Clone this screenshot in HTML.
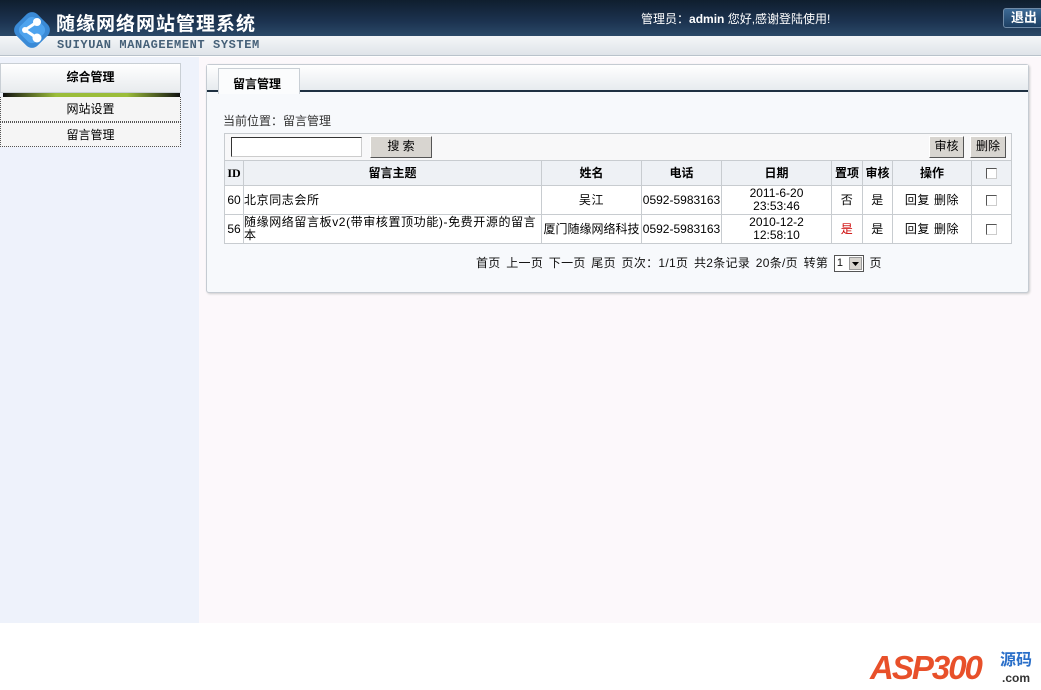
<!DOCTYPE html>
<html><head><meta charset="utf-8">
<style>
*{margin:0;padding:0;box-sizing:border-box}
body{width:1041px;height:690px;overflow:hidden;background:#fff;font-family:"Liberation Sans","Noto Sans CJK SC","WenQuanYi Zen Hei",sans-serif;font-size:12px;color:#000;position:relative}
.hd{position:absolute;left:0;top:0;width:1041px;height:36px;background:linear-gradient(#0f1e2e,#1c3350 60%,#2a4968)}
.band{position:absolute;left:0;top:36px;width:1041px;height:20px;background:linear-gradient(#f4f6f8,#dfe4e9);border-bottom:1px solid #b9c2cb}
.title{position:absolute;left:56px;top:9px;color:#fff;font-size:19px;font-weight:bold;letter-spacing:1px}
.sub{position:absolute;left:57px;top:38px;color:#456078;font-family:"Liberation Mono",monospace;font-size:12px;font-weight:bold;letter-spacing:0.6px}
.admin{position:absolute;left:641px;top:10px;color:#fff;font-size:12px}
.out{position:absolute;left:1003px;top:8px;width:40px;height:20px;border:1px solid #6f8aa6;border-radius:3px;background:linear-gradient(#3d6a95,#1d3f63);color:#fff;font-weight:bold;font-size:13px;padding-left:7px;line-height:18px}
.side{position:absolute;left:0;top:57px;width:199px;height:566px;background:#eef2fb}
.main{position:absolute;left:199px;top:57px;width:842px;height:566px;background:#fcf8fb}
.sh{position:absolute;left:0;top:63px;width:181px;height:30px;background:linear-gradient(#fff,#e8ebee);border:1px solid #c9cfd5;text-align:center;font-weight:bold;line-height:26px}
.sbar{position:absolute;left:3px;top:93px;width:177px;height:4px;background:linear-gradient(90deg,#111,#9bbd3a 30%,#9bbd3a 70%,#111)}
.si{position:absolute;left:0;width:181px;height:25px;border:1px dotted #555;border-top:none;background:#f5f5f5;text-align:center;line-height:24px}
.panel{position:absolute;left:206px;top:64px;width:823px;height:229px;background:#f7f9fc;border:1px solid #c5cbd2;border-radius:3px;box-shadow:1px 1px 2px #ccc}
.ptop{position:absolute;left:0;top:0;width:821px;height:27px;background:linear-gradient(#fff,#e7ebef);border-bottom:2px solid #1f3142}
.tab{position:absolute;left:11px;top:3px;width:82px;height:26px;background:#fbfcfd;border:1px solid #c9cfd5;border-bottom:none;font-weight:bold;padding:6px 0 0 14px}
.loc{position:absolute;left:223px;top:112px;color:#333}
table{position:absolute;left:224px;top:160px;width:788px;border-collapse:collapse;font-size:12px;table-layout:fixed}
td,th{border:1px solid #c8ccd0;text-align:center;height:25px;line-height:13px;overflow:hidden}
th{background:#eef1f5;font-weight:bold;height:25px}
td{background:#fff;height:29px;letter-spacing:0.6px}
.bar{position:absolute;left:224px;top:133px;width:788px;height:28px;border:1px solid #c8ccd0;background:#f8f8f9}
.inp{position:absolute;left:6px;top:3px;width:131px;height:20px;border:1px solid #333;border-right-color:#ccc;border-bottom-color:#ccc;background:#fff}
.btn{position:absolute;top:2px;height:22px;background:#d8d5d0;border:1px solid #fff;border-right-color:#555;border-bottom-color:#555;text-align:center;line-height:19px}
.cb{display:inline-block;width:11px;height:11px;border:1px solid #555;border-right-color:#ccc;border-bottom-color:#ccc;background:#fff;vertical-align:middle}
.pg{position:absolute;left:476px;top:254px;color:#111;word-spacing:2px;letter-spacing:0.3px;white-space:nowrap}
.sel{display:inline-block;width:30px;height:17px;border:1px solid #555;background:#fff;vertical-align:middle;position:relative;font-size:11px;padding-left:2px;line-height:14px;word-spacing:0}
.sel b{position:absolute;right:1px;top:1px;width:13px;height:13px;background:#d8d5d0;border:1px solid #999}
.logo{position:absolute;left:870px;top:648px;font-weight:bold;font-style:italic;font-size:33px;color:#e8502a;letter-spacing:-2px;line-height:40px;white-space:nowrap}
.logo span{position:absolute;left:130px;top:4px;font-size:16px;color:#2a6fc9;font-style:normal;letter-spacing:0;line-height:18px;white-space:nowrap}
.logo i{position:absolute;left:132px;top:23px;font-size:12px;color:#333;font-style:normal;letter-spacing:0;line-height:14px}
</style></head><body>
<div class="hd"></div><div class="band"></div>
<svg style="position:absolute;left:11px;top:9px" width="42" height="42" viewBox="0 0 42 42"><rect x="6" y="6" width="30" height="30" rx="8" transform="rotate(45 21 21)" fill="#3a8ad6"/><rect x="10" y="10" width="22" height="22" rx="6" transform="rotate(45 21 21)" fill="#4ea3ee"/><line x1="26" y1="13" x2="14" y2="21" stroke="#fff" stroke-width="3"/><line x1="14" y1="21" x2="26" y2="29" stroke="#fff" stroke-width="3"/><circle cx="26" cy="13" r="4" fill="#fff"/><circle cx="14" cy="21" r="3" fill="#fff"/><circle cx="26" cy="29" r="4.5" fill="#fff"/></svg>
<div class="title">随缘网络网站管理系统</div>
<div class="sub">SUIYUAN MANAGEEMENT SYSTEM</div>
<div class="admin">管理员：<b>admin</b> 您好,感谢登陆使用!</div>
<div class="out">退出</div>
<div class="side"></div><div class="main"></div>
<div class="sh">综合管理</div><div class="sbar"></div>
<div class="si" style="top:97px">网站设置</div>
<div class="si" style="top:122px;border-top:1px dotted #555">留言管理</div>
<div class="panel"><div class="ptop"></div><div class="tab">留言管理</div></div>
<div class="loc">当前位置：留言管理</div>
<div class="bar"><div class="inp"></div><div class="btn" style="left:145px;width:62px">搜 索</div><div class="btn" style="left:704px;width:35px">审核</div><div class="btn" style="left:745px;width:36px">删除</div></div>
<table>
<colgroup><col style="width:19px"><col style="width:298px"><col style="width:100px"><col style="width:80px"><col style="width:110px"><col style="width:31px"><col style="width:30px"><col style="width:79px"><col></colgroup>
<tr><th style="font-family:'Liberation Serif',serif">ID</th><th>留言主题</th><th>姓名</th><th>电话</th><th>日期</th><th>置项</th><th>审核</th><th>操作</th><th><span class="cb"></span></th></tr>
<tr><td style="letter-spacing:0">60</td><td style="text-align:left">北京同志会所</td><td>吴江</td><td style="letter-spacing:0">0592-5983163</td><td style="letter-spacing:0">2011-6-20<br>23:53:46</td><td>否</td><td>是</td><td>回复 删除</td><td><span class="cb"></span></td></tr>
<tr><td style="letter-spacing:0">56</td><td style="text-align:left">随缘网络留言板v2(带审核置顶功能)-免费开源的留言本</td><td style="letter-spacing:0">厦门随缘网络科技</td><td style="letter-spacing:0">0592-5983163</td><td style="letter-spacing:0">2010-12-2<br>12:58:10</td><td style="color:#c00">是</td><td>是</td><td>回复 删除</td><td><span class="cb"></span></td></tr>
</table>
<div class="pg">首页 上一页 下一页 尾页 页次：1/1页 共2条记录 20条/页 转第 <span class="sel">1<b><svg width="11" height="11" style="position:absolute;left:0;top:0"><path d="M2 4h7l-3.5 4z" fill="#000"/></svg></b></span> 页</div>
<div class="logo">ASP300<span>源码</span><i>.com</i></div>
</body></html>
